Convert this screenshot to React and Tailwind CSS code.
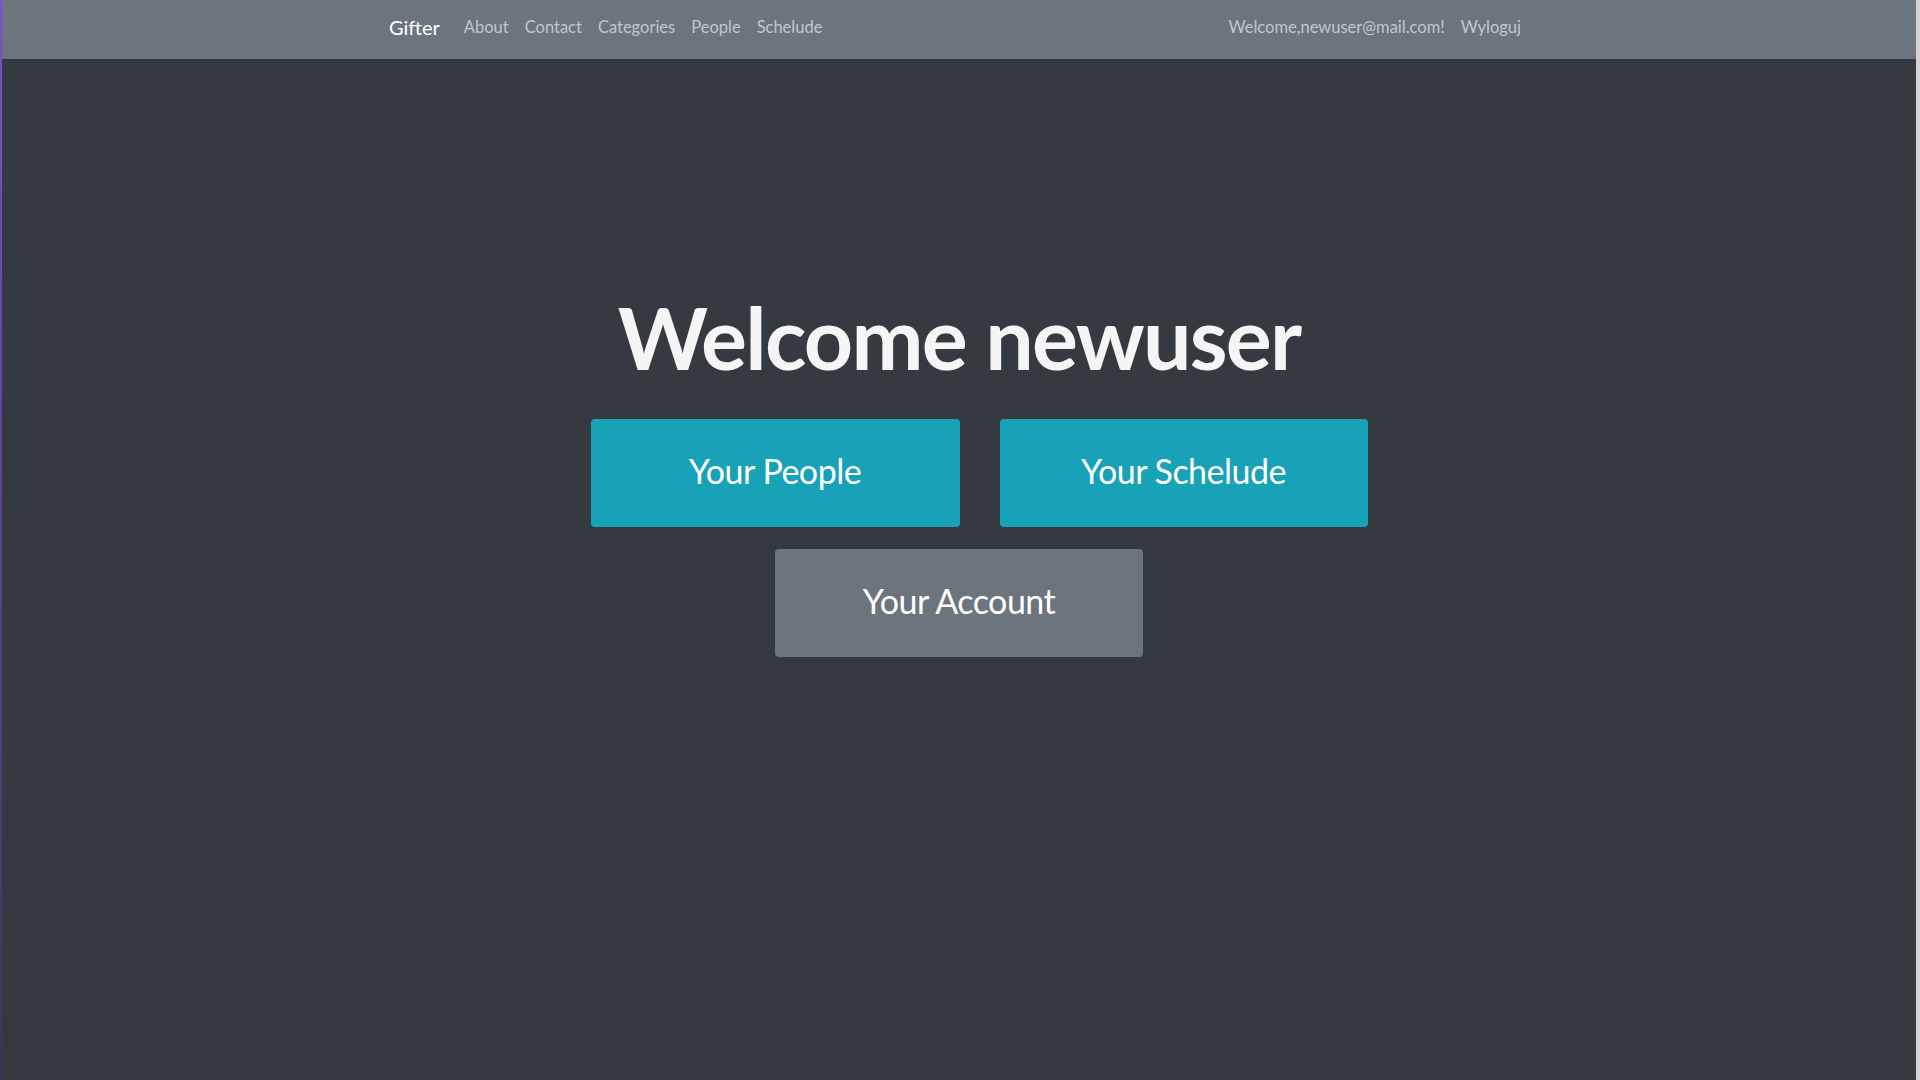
import React from 'react'

const leftLinks = ['About', 'Contact', 'Categories', 'People', 'Schelude']

export default function App() {
  return (
    <div
      className="flex h-screen overflow-hidden bg-[#343a40]"
      style={{ fontFamily: 'Lato, "Open Sans", sans-serif' }}
    >
      <div className="w-[2px] bg-gradient-to-b from-[#7b4fd6] to-[#3a3556]" />

      <div className="flex flex-1 flex-col">
        <nav className="flex h-[59px] justify-center bg-[#6c757d]">
          <div className="flex w-[1140px] items-center justify-between pb-[5px]">
            <div className="flex items-center">
              <a className="mr-4 text-[20px] text-white">Gifter</a>
              {leftLinks.map((l) => (
                <a key={l} className="px-2 text-[16.5px] text-white/60">
                  {l}
                </a>
              ))}
            </div>
            <div className="flex items-center">
              <span className="px-2 text-[16.5px] text-white/60">Welcome,newuser@mail.com!</span>
              <a className="px-2 text-[16.5px] text-white/60">Wyloguj</a>
            </div>
          </div>
        </nav>

        <main className="flex flex-col items-center">
          <h1 className="mt-[235px] text-[86px] font-bold leading-none tracking-[-0.02em] text-[#f5f5f5]">
            Welcome newuser
          </h1>

          <div className="ml-[40px] mt-[39px] flex gap-[40px]">
            <button className="flex h-[108px] w-[369px] items-center justify-center rounded-[4px] bg-[#17a2b8] pb-[6px] text-[34px] tracking-[-0.5px] text-white">
              Your People
            </button>
            <button className="flex h-[108px] w-[368px] items-center justify-center rounded-[4px] bg-[#17a2b8] pb-[6px] text-[34px] tracking-[-0.5px] text-white">
              Your Schelude
            </button>
          </div>

          <button className="mt-[22px] flex h-[108px] w-[368px] items-center justify-center rounded-[4px] bg-[#6c757d] pb-[6px] text-[34px] tracking-[-0.5px] text-white">
            Your Account
          </button>
        </main>
      </div>

      <div className="w-[4px] bg-[#d3d3d3]" />
    </div>
  )
}
